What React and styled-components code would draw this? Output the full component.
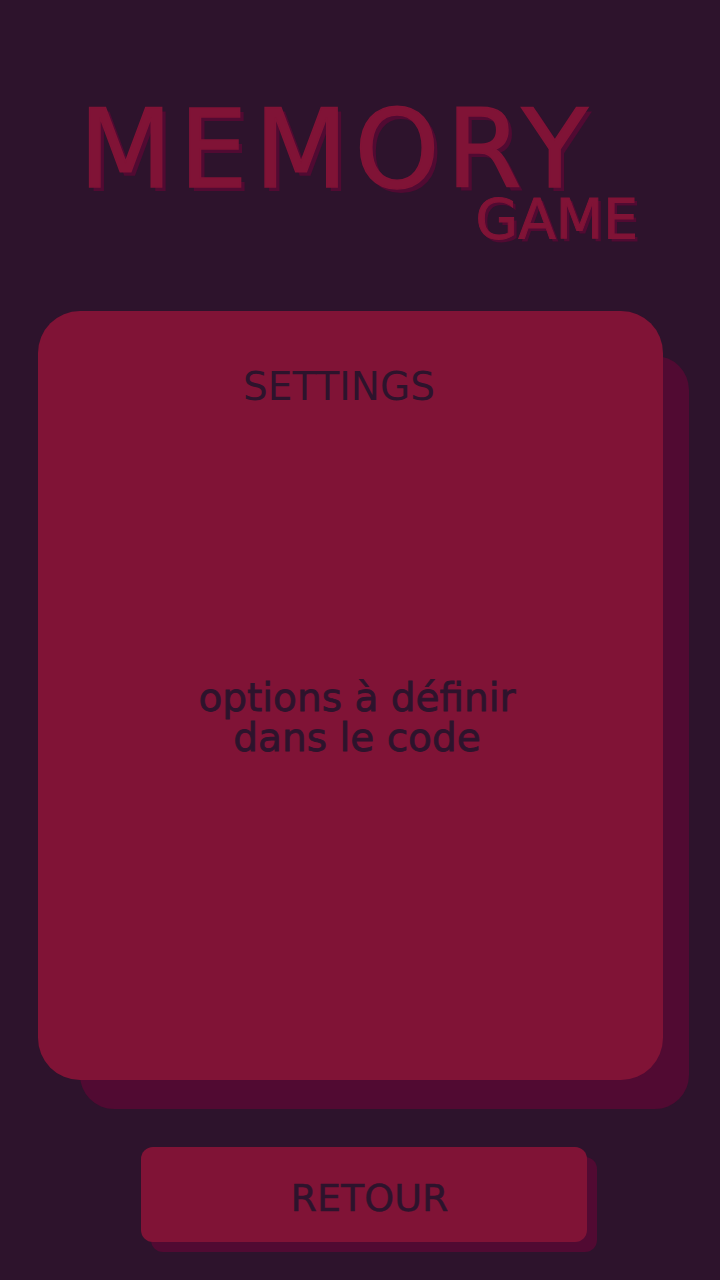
import React from "react";
import styled, { createGlobalStyle } from "styled-components";

const GlobalStyle = createGlobalStyle`
	* {
		box-sizing: border-box;
	}
	body {
		margin: 0;
		background-color: #2d132c;
		font-family: "DejaVu Sans", "Liberation Sans", sans-serif;
	}
`;

const App = () => {
	return (
		<>
			<GlobalStyle />
			<Page>
				<Header>
					<Title>MEMORY</Title>
					<SubTitle>GAME</SubTitle>
				</Header>
				<Card>
					<CardTitle>SETTINGS</CardTitle>
					<CardBody>
						options à définir
						<br />
						dans le code
					</CardBody>
				</Card>
				<BackButton>RETOUR</BackButton>
			</Page>
		</>
	);
};

const Page = styled.div`
	width: 720px;
	min-height: 1280px;
	display: flex;
	flex-direction: column;
	padding-top: 96px;
	background-color: #2d132c;
	overflow: hidden;
`;

const Header = styled.div`
	width: 556px;
	margin: 0 auto;
	display: flex;
	flex-direction: column;
`;

const Title = styled.h1`
	margin: 0 0 0 -3px;
	font-size: 108px;
	line-height: 1;
	font-weight: normal;
	letter-spacing: 7px;
	color: #801336;
	-webkit-text-stroke: 1.5px #801336;
	text-shadow: 4px 4px 0 #510a32;
	align-self: flex-start;
`;

const SubTitle = styled.h2`
	margin: -12px 0 0 0;
	font-size: 55px;
	line-height: 1;
	font-weight: normal;
	color: #801336;
	-webkit-text-stroke: 1px #801336;
	text-shadow: 3px 3px 0 #510a32;
	align-self: flex-end;
`;

const Card = styled.div`
	width: 625px;
	height: 769px;
	margin: 64px 0 0 38px;
	display: flex;
	flex-direction: column;
	align-items: center;
	padding-top: 56px;
	border-radius: 42px;
	background-color: #801336;
	box-shadow: 34px 37px 0 -8px #510a32;
`;

const CardTitle = styled.h3`
	margin: 0;
	padding-right: 23px;
	font-size: 39px;
	line-height: 1;
	font-weight: normal;
	color: #2d132c;
`;

const CardBody = styled.p`
	margin: 272px 0 0 0;
	padding-left: 13px;
	font-size: 39px;
	line-height: 40px;
	text-align: center;
	color: #2d132c;
	-webkit-text-stroke: 0.8px #2d132c;
`;

const BackButton = styled.button`
	width: 446px;
	height: 95px;
	margin: 67px 0 0 141px;
	padding: 6px 0 0 11px;
	border: none;
	border-radius: 12px;
	background-color: #801336;
	box-shadow: 10px 10px 0 #510a32;
	font-family: inherit;
	font-size: 38px;
	line-height: 1;
	color: #2d132c;
	-webkit-text-stroke: 0.5px #2d132c;
	cursor: pointer;
`;

export default App;
